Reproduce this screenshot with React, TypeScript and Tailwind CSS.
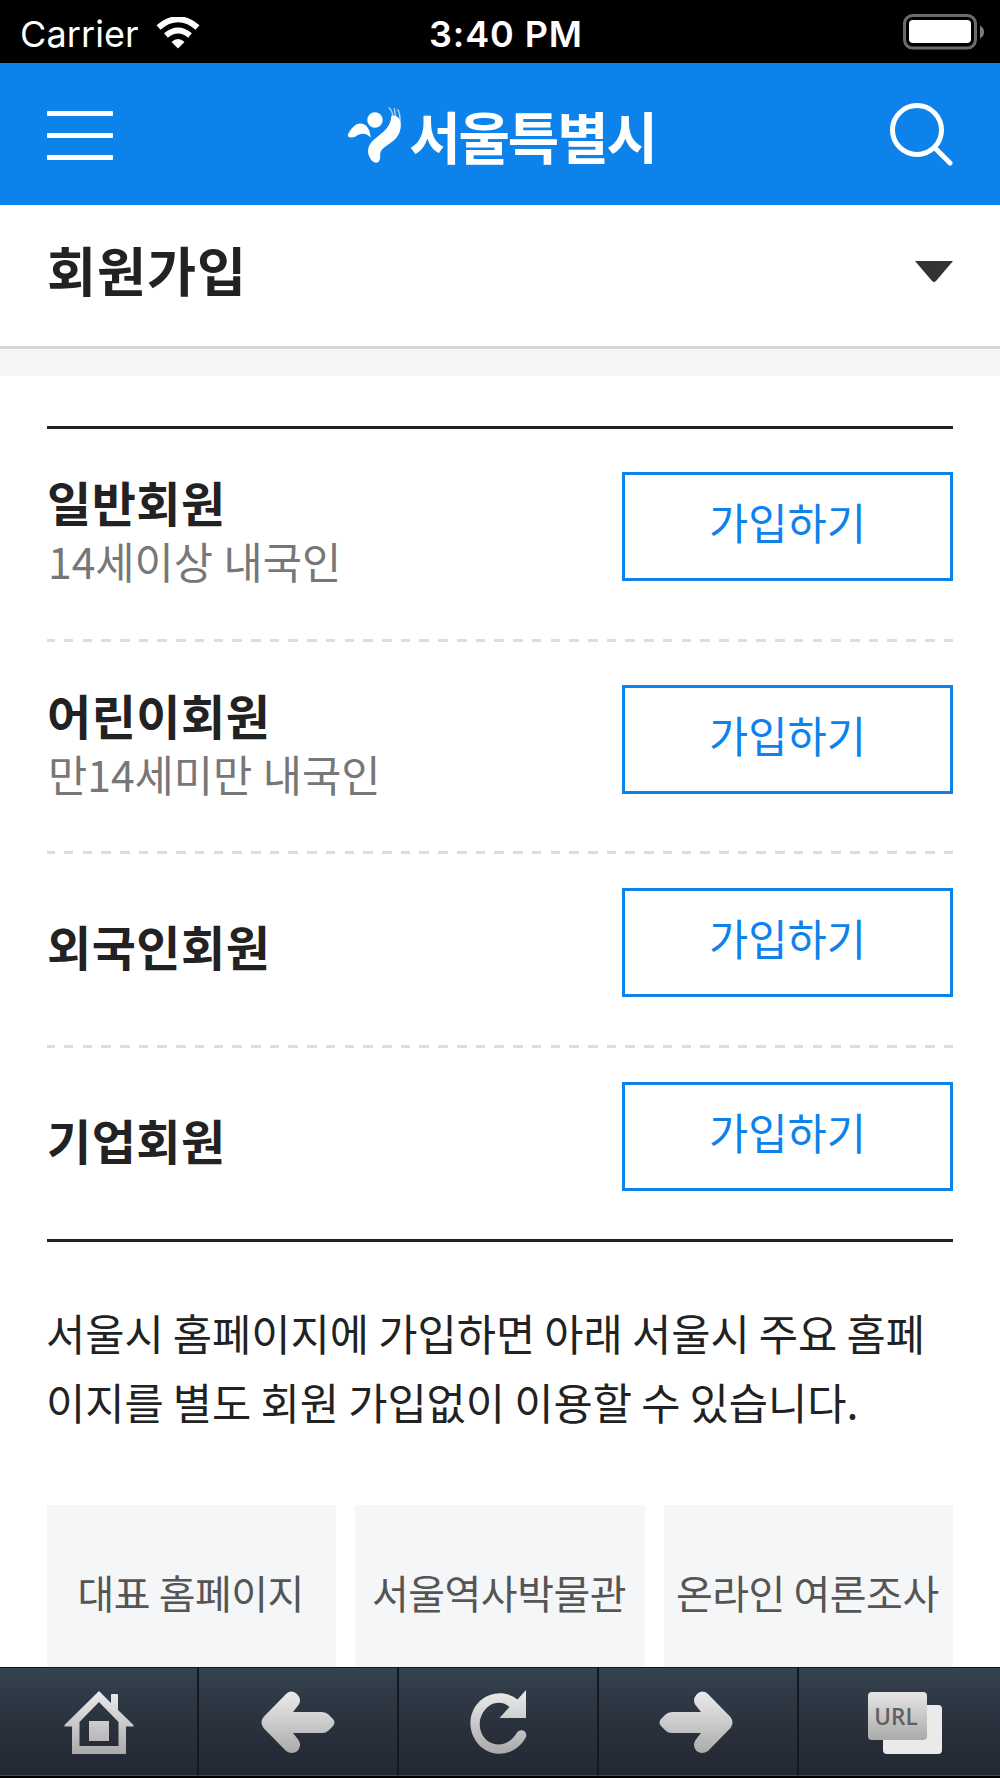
import React from 'react'
import { clsx } from 'clsx'

interface Membership {
  title: string
  description?: string
  rowClass: string
}

const MEMBERSHIPS: Membership[] = [
  { title: '일반회원', description: '14세이상 내국인', rowClass: 'h-[210px] pt-[43px]' },
  { title: '어린이회원', description: '만14세미만 내국인', rowClass: 'h-[209px] pt-[43px]' },
  { title: '외국인회원', rowClass: 'h-[191px] pt-[34px]' },
  { title: '기업회원', rowClass: 'h-[191px] pt-[34px]' },
]

const SITES = ['대표 홈페이지', '서울역사박물관', '온라인 여론조사']

const StatusBar = () => (
  <div className="grid h-[63px] shrink-0 grid-cols-3 items-center bg-black pt-1 text-white font-[Inter,sans-serif]">
    <div className="flex items-center gap-[17px] pl-5">
      <span className="text-[36px] leading-none tracking-[0.1px]">Carrier</span>
      <svg width="44" height="32" viewBox="0 0 44 32" className="-mt-0.5" fill="none">
        <path d="M2.5 10.5Q22-6 41.5 10.5" stroke="white" strokeWidth="6" />
        <path d="M10 18.500Q22 8.500 34 18.500" stroke="white" strokeWidth="6" />
        <path d="M15.500 25Q22 19 28.500 25L22 31.500Z" fill="white" />
      </svg>
    </div>
    <span className="text-center text-[36px] leading-none font-semibold tracking-[0.9px] pl-3">3:40 PM</span>
    <div className="flex justify-end pr-[15px]">
      <svg width="82" height="36" viewBox="0 0 82 36" className="-mt-[3px]">
        <rect x="1.500" y="1.500" width="71" height="32.500" rx="8" fill="none" stroke="#6b6b6b" strokeWidth="3" />
        <rect x="6" y="6" width="62" height="23" rx="4" fill="white" />
        <path d="M77 11.500Q81 13.500 81 18T77 24.500Z" fill="#7c7c7c" />
      </svg>
    </div>
  </div>
)

const SeoulMark = () => (
  <svg width="55" height="60" viewBox="0 0 57 60" fill="white">
    <circle cx="29" cy="14.500" r="8" />
    <path d="M1 29.500C4 23 9 18 14 18C20 18 24 24 24.500 32.500C19 27.500 14 28 9 31.500C5 33.500 0 33 1 29.500Z" />
    <path d="M46 10C53 9 57 15 55.500 23C53 39 36 40 34.500 49C34 54 35 55 32.500 58C29 60.500 24 57 22 49C20 31 45 31 46 10Z" />
    <path
      d="M43.500 1.500C47 5 48.500 9 47 16M49 2L51 16M52.500 3.500C55 8 55.500 13 54.500 19"
      fill="none"
      stroke="white"
      strokeWidth="1.500"
      opacity="0.65"
    />
  </svg>
)

const Header = () => (
  <header className="flex h-[141.500px] shrink-0 items-center justify-between bg-[#0e82eb] px-[47px] text-white">
    <button aria-label="메뉴" className="flex w-[66px] flex-col gap-[17px] pt-[3px]">
      <span className="h-[5px] rounded-[1px] bg-white" />
      <span className="h-[5px] rounded-[1px] bg-white" />
      <span className="h-[5px] rounded-[1px] bg-white" />
    </button>
    <a className="flex items-center gap-[7px] pt-[3px] pl-px">
      <SeoulMark />
      <span className="text-[56px] leading-none font-bold tracking-[-2.200px]">서울특별시</span>
    </a>
    <button aria-label="검색">
      <svg width="64" height="64" viewBox="0 0 64 64" fill="none" stroke="white" strokeWidth="5" strokeLinecap="round">
        <circle cx="28" cy="28" r="24.500" />
        <path d="M45.500 45.500L61 61" />
      </svg>
    </button>
  </header>
)

const MembershipRow = ({ title, description, rowClass, last }: Membership & { last: boolean }) => (
  <li className="flex flex-col">
    <div className={clsx('flex justify-between', rowClass)}>
      <div className={description ? 'pt-[2px]' : 'pt-[30px]'}>
        <h2 className="text-[48px] leading-[54px] font-bold tracking-[0.5px] text-[#222]">{title}</h2>
        {description && (
          <p className="pt-[2px] pl-px text-[42.670px] leading-[62px] text-[#777] [word-spacing:-1.500px]">
            {description}
          </p>
        )}
      </div>
      <button className="flex h-[109px] w-[331px] items-center justify-center border-3 border-[#0e82eb] pb-2 text-[42.670px] leading-none text-[#0e82eb]">
        가입하기
      </button>
    </div>
    {!last && (
      <div className="h-[3px] bg-[repeating-linear-gradient(90deg,#ddd_0_7.7px,transparent_7.7px_16.8px,#ddd_16.8px_18.72px)]" />
    )}
  </li>
)

// Shared top-to-bottom shading of the toolbar glyphs
const Shade = ({ id }: { id: string }) => (
  <defs>
    <linearGradient id={id} x1="0" y1="0" x2="0" y2="64" gradientUnits="userSpaceOnUse">
      <stop offset="0" stopColor="#ececec" />
      <stop offset="1" stopColor="#a9a9a9" />
    </linearGradient>
  </defs>
)

const HomeIcon = () => (
  <svg width="70" height="64" viewBox="0 0 70 64">
    <Shade id="home" />
    <path
      fill="url(#home)"
      fillRule="evenodd"
      d="M35 0L47 12V4Q47 3 48 3H53Q54 3 54 4V19L69.500 34V35.500H62V63H8V35.500H.500V34ZM35 11L15.500 31V55H54.500V31Z"
    />
    <rect x="25" y="30" width="20" height="20" fill="url(#home)" />
  </svg>
)

const ArrowIcon = ({ flip = false }: { flip?: boolean }) => (
  <svg width="74" height="64" viewBox="0 0 74 64" className={flip ? '-scale-x-100' : 'ml-[3px]'}>
    <Shade id={flip ? 'forward' : 'back'} />
    <path
      fill={flip ? 'url(#forward)' : 'url(#back)'}
      d="M25 3Q31-2 36.500 3.500Q41 9 37.500 14L32 21H61Q65 21 67.500 23.500L72 28Q75 31.500 72 35L67.500 39.500Q65 42 61 42H32L37.500 49Q41 55 36.500 60Q31 64 25 60L2.500 37Q-1.500 31.500 2.500 26Z"
    />
  </svg>
)

const ReloadIcon = () => (
  <svg width="58" height="66" viewBox="0 0 58 66" className="ml-[5px]">
    <Shade id="reload" />
    <path
      fill="url(#reload)"
      d="M56 0V28H29.500L39.500 17C34 11.500 25 11.500 19 16C7 25 7 42 17 50.500C26 57 38 56 46 44C50 37 58 41 56 47C45 67 23 68 10 56C-3 43-3 22 11 10C22 1 37 1 47.500 9.500Z"
    />
  </svg>
)

const UrlIcon = () => (
  <div className="grid text-[22.500px] leading-none font-[Open_Sans,sans-serif] text-[#606060]">
    <div className="col-start-1 row-start-1 mt-[13px] ml-[15px] h-[49px] w-[59px] rounded-[4px] bg-[#eaeaea]" />
    <div className="z-10 col-start-1 row-start-1 flex h-[48px] w-[59px] items-center justify-center rounded-[4px] bg-linear-to-b from-[#e6e6e6] to-[#aaa] pt-[3px] pr-0.5 font-semibold">
      URL
    </div>
  </div>
)

const TOOLBAR = [
  { label: '홈', icon: <HomeIcon /> },
  { label: '뒤로', icon: <ArrowIcon /> },
  { label: '새로고침', icon: <ReloadIcon /> },
  { label: '앞으로', icon: <ArrowIcon flip /> },
  { label: 'URL', icon: <UrlIcon /> },
]

const Toolbar = () => (
  <nav className="grid h-[111px] shrink-0 grid-cols-[197px_200px_200px_200px_1fr] border-t border-b-2 border-t-[#14181e] border-b-black bg-linear-to-b from-[#35424f] via-[#2a323e] to-[#222733]">
    {TOOLBAR.map(({ label, icon }, i) => (
      <button
        key={label}
        aria-label={label}
        className={clsx(
          'flex items-center justify-center border-b border-b-[#454c54] pt-[2px]',
          i > 0 && 'border-l-2 border-l-[#15181d] pr-1',
          i === 4 && 'pl-[14px]'
        )}
      >
        {icon}
      </button>
    ))}
  </nav>
)

export default function App() {
  return (
    <div
      lang="ko"
      className="flex h-[1778px] w-[1000px] flex-col overflow-hidden bg-white font-['Noto_Sans_CJK_KR',sans-serif] text-[#222]"
    >
      <StatusBar />
      <Header />

      <div className="flex h-[144.500px] shrink-0 items-start justify-between border-b-3 border-[#d6d6d6] px-[47px] pt-[32px]">
        <h1 className="text-[53.330px] leading-[64px] font-bold tracking-[0.900px]">회원가입</h1>
        <svg width="38" height="22" viewBox="0 0 38 22" className="mt-[24px]">
          <path d="M0 0H38L21 20Q19 22 17 20Z" fill="#333" />
        </svg>
      </div>
      <div className="h-[27px] shrink-0 bg-[#f4f6f8]" />

      <main className="flex min-h-0 grow flex-col overflow-hidden px-[47px] pt-[50px]">
        <ul className="shrink-0 border-y-3 border-[#222]">
          {MEMBERSHIPS.map((membership, i) => (
            <MembershipRow key={membership.title} {...membership} last={i === MEMBERSHIPS.length - 1} />
          ))}
        </ul>

        <p className="mt-[56px] -ml-px shrink-0 text-[42.670px] leading-[69px] whitespace-nowrap [word-spacing:-2.800px]">
          서울시 홈페이지에 가입하면 아래 서울시 주요 홈페
          <br />
          이지를 별도 회원 가입없이 이용할 수 있습니다.
        </p>

        <div className="mt-[69px] grid grow grid-cols-3 gap-[19px]">
          {SITES.map((site) => (
            <a
              key={site}
              className="flex h-[180px] justify-center bg-[#f4f6f8] pt-[57px] pr-0.5 text-[40px] leading-[60px] tracking-[-0.500px] whitespace-nowrap text-[#555] [word-spacing:-2px]"
            >
              {site}
            </a>
          ))}
        </div>
      </main>

      <Toolbar />
    </div>
  )
}
